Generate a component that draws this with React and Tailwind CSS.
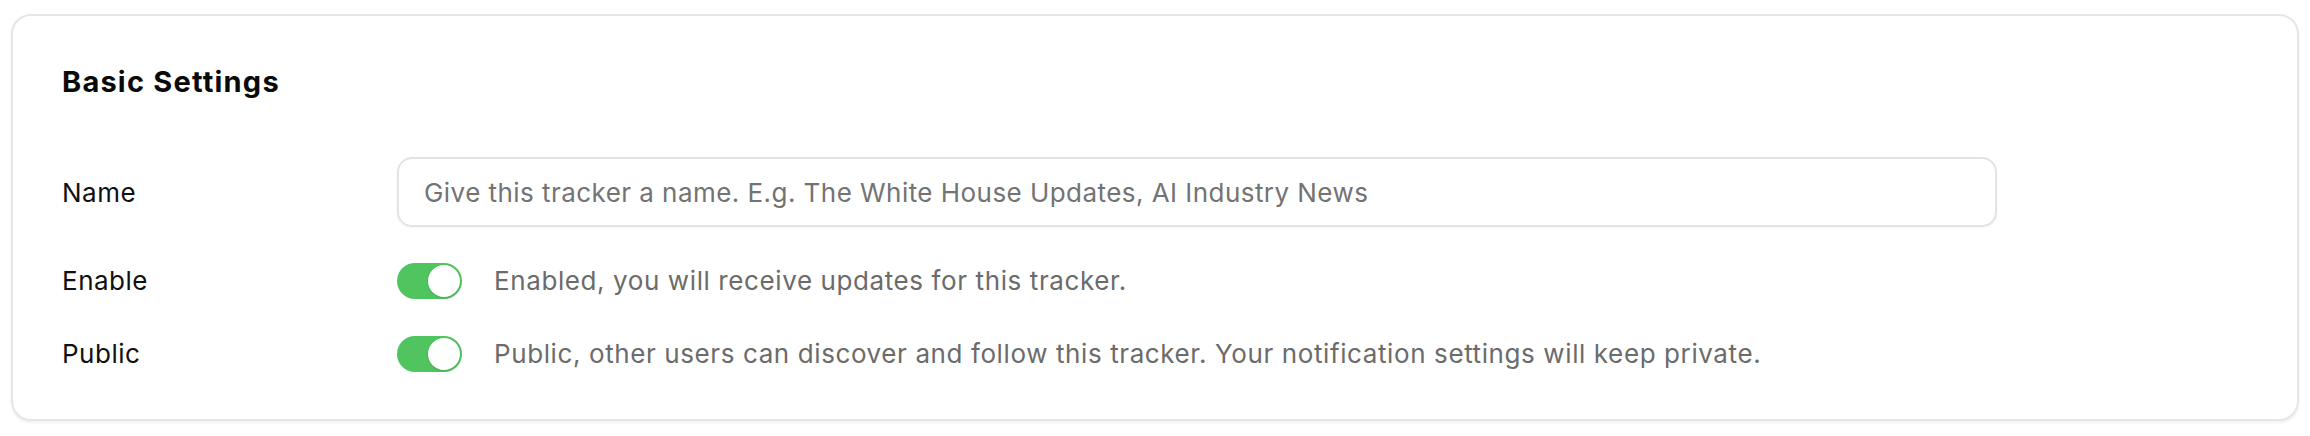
import { useState } from "react";

function Toggle({ on, onChange }) {
  return (
    <button
      type="button"
      onClick={() => onChange(!on)}
      className={`relative h-[36px] w-[65px] shrink-0 rounded-full ${on ? "bg-[#4fc45f]" : "bg-[#e5e5e5]"}`}
    >
      <span
        className={`absolute top-[2px] h-[32px] w-[32px] rounded-full bg-white shadow-sm ${on ? "left-[31px]" : "left-[2px]"}`}
      />
    </button>
  );
}

function Row({ label, children }) {
  return (
    <div className="flex items-center">
      <div className="w-[335px] shrink-0 text-[26px] tracking-[0.5px] text-[#111111]">{label}</div>
      {children}
    </div>
  );
}

export default function App() {
  const [enabled, setEnabled] = useState(true);
  const [isPublic, setIsPublic] = useState(true);

  return (
    <div className="min-h-screen bg-white px-[11px] pt-[14px] font-['Inter',sans-serif]">
      <div className="rounded-[20px] border-2 border-[#e6e6e6] bg-white px-[49px] pb-[46px] pt-[46px] shadow-[0_2px_3px_rgba(0,0,0,0.06)]">
        <h2 className="text-[29px] font-bold leading-[40px] tracking-[1.2px] text-[#0a0a0a]">Basic Settings</h2>

        <div className="mt-[55px] flex flex-col gap-[34px]">
          <Row label="Name">
            <input
              className="h-[70px] w-[1600px] rounded-[15px] border-2 border-[#e3e3e3] px-[25px] text-[26px] tracking-[0.45px] text-[#111] shadow-[0_1px_2px_rgba(0,0,0,0.05)] outline-none placeholder:text-[#737373]"
              placeholder="Give this tracker a name. E.g. The White House Updates, AI Industry News"
            />
          </Row>
          <Row label="Enable">
            <Toggle on={enabled} onChange={setEnabled} />
            <span className="ml-[32px] text-[26px] tracking-[0.6px] text-[#6b6b6b]">
              Enabled, you will receive updates for this tracker.
            </span>
          </Row>
          <Row label="Public">
            <Toggle on={isPublic} onChange={setIsPublic} />
            <span className="ml-[32px] text-[26px] tracking-[0.6px] text-[#6b6b6b]">
              Public, other users can discover and follow this tracker. Your notification settings will keep private.
            </span>
          </Row>
        </div>
      </div>
    </div>
  );
}
